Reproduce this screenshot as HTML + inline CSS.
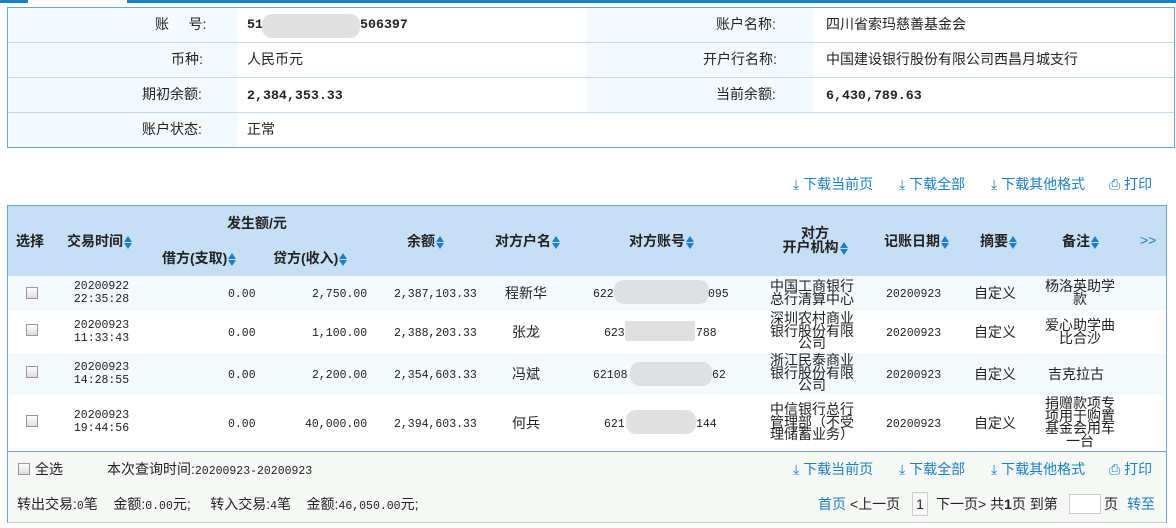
<!DOCTYPE html>
<html><head><meta charset="utf-8"><style>
*{margin:0;padding:0;box-sizing:border-box}
body{width:1176px;height:528px;background:#fff;font-family:"Liberation Sans","Noto Sans CJK SC","WenQuanYi Zen Hei",sans-serif;font-size:14px;color:#222;position:relative;overflow:hidden}
.a{position:absolute;white-space:nowrap;line-height:15px}
.blur{position:absolute;background:#d8d8d8;border-radius:10px;opacity:.8}
.mono{font-family:"Liberation Mono","DejaVu Sans Mono",monospace;font-size:11.5px}
.mb{font-family:"Liberation Mono","DejaVu Sans Mono",monospace;font-size:13.3px;font-weight:bold}
.b{font-weight:bold}
.lk{color:#1a7fc8}
.cb{position:absolute;width:12px;height:12px;border:1px solid #999;background:linear-gradient(#fff,#ddd)}
.ml{position:absolute;text-align:center;line-height:12.5px;white-space:normal}
.ar{display:inline-block;vertical-align:middle;width:8px;height:15px;position:relative;margin-left:1px}
.ar:before{content:"";position:absolute;left:0;top:1px;border:4px solid transparent;border-bottom:6px solid #1a7fc8;border-top:0}
.ar:after{content:"";position:absolute;left:0;top:8px;border:4px solid transparent;border-top:6px solid #1a7fc8;border-bottom:0}
</style></head><body>
<div class="a" style="left:0;top:0;width:28px;height:3px;background:#1a7fc8"></div>
<div class="a" style="left:127px;top:0;width:1049px;height:3px;background:#1a7fc8"></div>

<div class="a" style="left:7px;top:7px;width:1168px;height:141px;border:1px solid #6aa5d8"></div>
<div class="a" style="left:8px;top:8px;width:229px;height:139px;background:#f4f9fd"></div>
<div class="a" style="left:586px;top:8px;width:227px;height:104px;background:#f4f9fd"></div>
<div class="a" style="left:8px;top:42px;width:1166px;height:1px;background:#c4d9ec"></div>
<div class="a" style="left:8px;top:77px;width:1166px;height:1px;background:#c4d9ec"></div>
<div class="a" style="left:8px;top:112px;width:1166px;height:1px;background:#c4d9ec"></div>

<div class="a" style="left:155px;top:17px">账&nbsp;&nbsp;&nbsp;&nbsp;&nbsp;号:</div>
<div class="a mb" style="left:247px;top:17px">51</div>
<div class="blur" style="left:262px;top:14px;width:98px;height:24px"></div>
<div class="a mb" style="left:360px;top:17px">506397</div>
<div class="a" style="left:171px;top:52px">币种:</div>
<div class="a" style="left:247px;top:52px">人民币元</div>
<div class="a" style="left:142px;top:87px">期初余额:</div>
<div class="a mb" style="left:247px;top:88px">2,384,353.33</div>
<div class="a" style="left:142px;top:122px">账户状态:</div>
<div class="a" style="left:247px;top:122px">正常</div>
<div class="a" style="left:716px;top:17px">账户名称:</div>
<div class="a" style="left:826px;top:17px">四川省索玛慈善基金会</div>
<div class="a" style="left:703px;top:52px">开户行名称:</div>
<div class="a" style="left:826px;top:52px">中国建设银行股份有限公司西昌月城支行</div>
<div class="a" style="left:716px;top:87px">当前余额:</div>
<div class="a mb" style="left:826px;top:88px">6,430,789.63</div>

<div class="a lk" style="left:793px;top:177px">⤓ 下载当前页</div>
<div class="a lk" style="left:899px;top:177px">⤓ 下载全部</div>
<div class="a lk" style="left:991px;top:177px">⤓ 下载其他格式</div>
<div class="a lk" style="left:1109px;top:177px">⎙ 打印</div>

<div class="a" style="left:7px;top:205px;width:1160px;height:318px;border:1px solid #6aa5d8;border-bottom-color:#ccc"></div>
<div class="a" style="left:8px;top:206px;width:1158px;height:70px;background:#c7dff4"></div>
<div class="a" style="left:8px;top:276px;width:1158px;height:35px;background:#f4f9fc"></div>
<div class="a" style="left:8px;top:353px;width:1158px;height:42px;background:#f4f9fc"></div>
<div class="a" style="left:8px;top:451px;width:1158px;height:71px;background:#f5f8f4;border-top:1px solid #6aa5d8"></div>

<div class="a b" style="left:16px;top:234px">选择</div>
<div class="a b" style="left:67px;top:234px">交易时间<span class="ar"></span></div>
<div class="a b" style="left:227px;top:216px">发生额/元</div>
<div class="a b" style="left:162px;top:251px">借方(支取)<span class="ar"></span></div>
<div class="a b" style="left:273px;top:251px">贷方(收入)<span class="ar"></span></div>
<div class="a b" style="left:407px;top:234px">余额<span class="ar"></span></div>
<div class="a b" style="left:495px;top:234px">对方户名<span class="ar"></span></div>
<div class="a b" style="left:629px;top:234px">对方账号<span class="ar"></span></div>
<div class="ml b" style="left:770px;top:226px;width:90px;line-height:14px">对方<br>开户机构<span class="ar"></span></div>
<div class="a b" style="left:884px;top:234px">记账日期<span class="ar"></span></div>
<div class="a b" style="left:980px;top:234px">摘要<span class="ar"></span></div>
<div class="a b" style="left:1062px;top:234px">备注<span class="ar"></span></div>
<div class="a lk" style="left:1140px;top:233px">&gt;&gt;</div>

<!-- rows -->
<div class="cb" style="left:26px;top:287px"></div>
<div class="ml mono" style="left:64px;top:281px;width:75px">20200922<br>22:35:28</div>
<div class="a mono" style="left:228px;top:287px">0.00</div>
<div class="a mono" style="left:312px;top:287px">2,750.00</div>
<div class="a mono" style="left:394px;top:287px">2,387,103.33</div>
<div class="a" style="left:505px;top:286px">程新华</div>
<div class="a mono" style="left:593px;top:287px">622</div>
<div class="blur" style="left:614px;top:280px;width:95px;height:24px"></div>
<div class="a mono" style="left:708px;top:287px">095</div>
<div class="ml" style="left:762px;top:280px;width:100px">中国工商银行<br>总行清算中心</div>
<div class="a mono" style="left:886px;top:287px">20200923</div>
<div class="a" style="left:974px;top:286px">自定义</div>
<div class="ml" style="left:1040px;top:280px;width:80px">杨洛英助学<br>款</div>

<div class="cb" style="left:26px;top:324px"></div>
<div class="ml mono" style="left:64px;top:320px;width:75px">20200923<br>11:33:43</div>
<div class="a mono" style="left:228px;top:326px">0.00</div>
<div class="a mono" style="left:312px;top:326px">1,100.00</div>
<div class="a mono" style="left:394px;top:326px">2,388,203.33</div>
<div class="a" style="left:512px;top:325px">张龙</div>
<div class="a mono" style="left:604px;top:326px">623</div>
<div class="blur" style="left:625px;top:321px;width:70px;height:20px;border-radius:2px"></div>
<div class="a mono" style="left:696px;top:326px">788</div>
<div class="ml" style="left:762px;top:312px;width:100px">深圳农村商业<br>银行股份有限<br>公司</div>
<div class="a mono" style="left:886px;top:326px">20200923</div>
<div class="a" style="left:974px;top:325px">自定义</div>
<div class="ml" style="left:1040px;top:319px;width:80px">爱心助学曲<br>比合沙</div>

<div class="cb" style="left:26px;top:366px"></div>
<div class="ml mono" style="left:64px;top:362px;width:75px">20200923<br>14:28:55</div>
<div class="a mono" style="left:228px;top:368px">0.00</div>
<div class="a mono" style="left:312px;top:368px">2,200.00</div>
<div class="a mono" style="left:394px;top:368px">2,354,603.33</div>
<div class="a" style="left:512px;top:367px">冯斌</div>
<div class="a mono" style="left:593px;top:368px">62108</div>
<div class="blur" style="left:630px;top:362px;width:82px;height:24px"></div>
<div class="a mono" style="left:712px;top:368px">62</div>
<div class="ml" style="left:762px;top:354px;width:100px">浙江民泰商业<br>银行股份有限<br>公司</div>
<div class="a mono" style="left:886px;top:368px">20200923</div>
<div class="a" style="left:974px;top:367px">自定义</div>
<div class="a" style="left:1048px;top:367px">吉克拉古</div>

<div class="cb" style="left:26px;top:415px"></div>
<div class="ml mono" style="left:64px;top:410px;width:75px">20200923<br>19:44:56</div>
<div class="a mono" style="left:228px;top:417px">0.00</div>
<div class="a mono" style="left:305px;top:417px">40,000.00</div>
<div class="a mono" style="left:394px;top:417px">2,394,603.33</div>
<div class="a" style="left:512px;top:416px">何兵</div>
<div class="a mono" style="left:604px;top:417px">621</div>
<div class="blur" style="left:626px;top:410px;width:70px;height:24px"></div>
<div class="a mono" style="left:696px;top:417px">144</div>
<div class="ml" style="left:762px;top:403px;width:100px">中信银行总行<br>管理部（不受<br>理储蓄业务）</div>
<div class="a mono" style="left:886px;top:417px">20200923</div>
<div class="a" style="left:974px;top:416px">自定义</div>
<div class="ml" style="left:1040px;top:397px;width:80px">捐赠款项专<br>项用于购置<br>基金会用车<br>一台</div>

<!-- footer -->
<div class="cb" style="left:18px;top:463px"></div>
<div class="a" style="left:35px;top:462px">全选</div>
<div class="a" style="left:107px;top:462px">本次查询时间:<span class="mono">20200923-20200923</span></div>
<div class="a lk" style="left:793px;top:462px">⤓ 下载当前页</div>
<div class="a lk" style="left:899px;top:462px">⤓ 下载全部</div>
<div class="a lk" style="left:991px;top:462px">⤓ 下载其他格式</div>
<div class="a lk" style="left:1109px;top:462px">⎙ 打印</div>
<div class="a" style="left:17px;top:497px">转出交易:<span class="mono">0</span>笔&nbsp;&nbsp;&nbsp;&nbsp;金额:<span class="mono">0.00</span>元;&nbsp;&nbsp;&nbsp;&nbsp;&nbsp;转入交易:<span class="mono">4</span>笔&nbsp;&nbsp;&nbsp;&nbsp;金额:<span class="mono">46,050.00</span>元;</div>
<div class="a lk" style="left:818px;top:497px">首页</div>
<div class="a" style="left:850px;top:497px">&lt;上一页</div>
<div class="a" style="left:912px;top:492px;width:16px;height:24px;border:1px solid #ccc;text-align:center;line-height:22px;background:#f5f8f4">1</div>
<div class="a" style="left:936px;top:497px">下一页&gt; 共<b>1</b>页 到第</div>
<div class="a" style="left:1069px;top:494px;width:32px;height:20px;border:1px solid #ccc;background:#fff"></div>
<div class="a" style="left:1104px;top:497px">页</div>
<div class="a lk" style="left:1127px;top:497px">转至</div>
</body></html>
